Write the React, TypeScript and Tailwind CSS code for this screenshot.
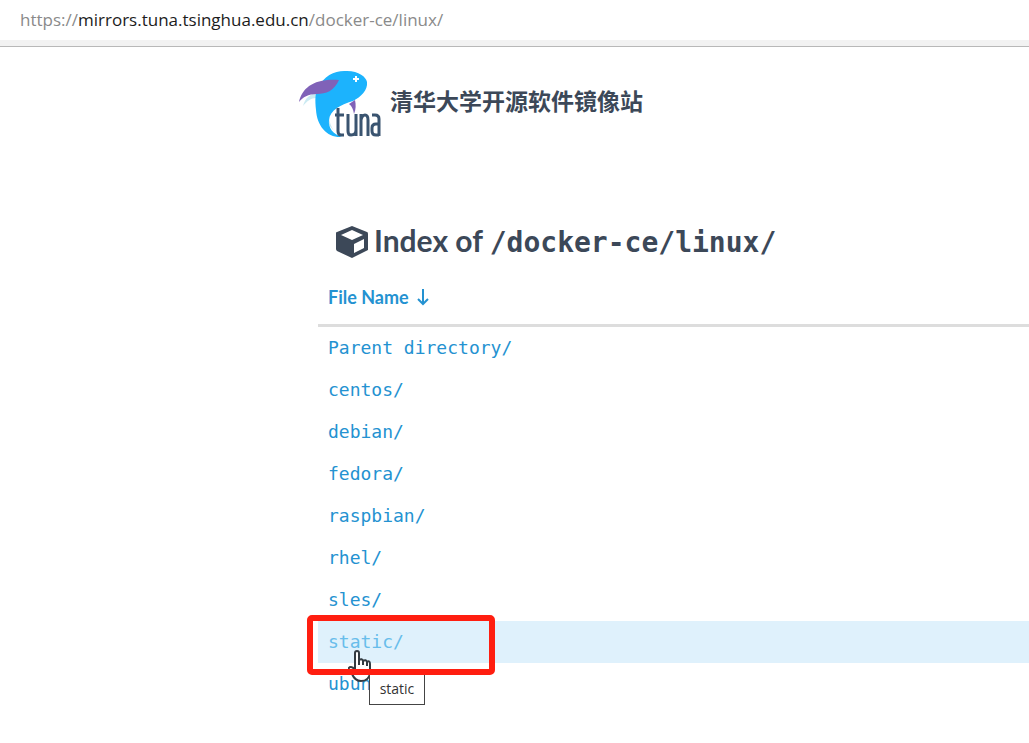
import React from "react";

const rows = [
  "Parent directory/",
  "centos/",
  "debian/",
  "fedora/",
  "raspbian/",
  "rhel/",
  "sles/",
  "static/",
  "ubuntu/",
];

function TunaLogo() {
  return (
    <svg viewBox="0 0 84 68" className="h-[68px] w-[84px] shrink-0" role="img" aria-label="tuna">
      <path d="M5 36C7 28 12 24 20 22L18 28C13 28 9 31 5 36Z" fill="#cbeaf2" />
      <path d="M32 33C30 43 30 52 36 61L26 49Z" fill="#cbeaf2" />
      <path
        d="M20 18C26 5 38 0 49 1C61 1 68 7 69 12C70 20 63 27 55 31C42 35 32 40 31 50C30 58 35 64 44 67C29 68 19 56 18 40C17 30 17 23 20 18Z"
        fill="#1cb3fd"
      />
      <path d="M1 32C4 18 16 8 41 10C36 21 28 24 19 24C10 24 5 27 1 32Z" fill="#8062b8" />
      <path d="M51 34L57 30C58 35 58 39 56 44C55 39 54 36 51 34Z" fill="#8062b8" />
      <path d="M58 6V12M55 9H61" stroke="#fff" strokeWidth="2" />
      <g fill="none" stroke="#3a5470" strokeWidth="3">
        <path d="M40 38V61Q40 65 43 65H46M37 45H46" />
        <path d="M50 44V61Q50 65 53 65Q58 65 58 60V44V66" />
        <path d="M63 66V44M63 50Q64 45 67 45Q70 45 70 50V66" />
        <path d="M74 45H77Q81 45 81 49V66M81 54H78Q74 54 74 58V61Q74 65 78 65H81" />
      </g>
    </svg>
  );
}

function Cube() {
  return (
    <svg viewBox="0 0 32 32" className="h-8 w-8 shrink-0" aria-hidden="true">
      <path
        fillRule="evenodd"
        fill="#3c4858"
        d="M16 0L31 6Q32 6 32 8V24L16 32L1 25Q0 24 0 23V7Q0 6 1 6ZM16 4L5 9L16 14L27 9ZM18 18V27L28 22V13Z"
      />
    </svg>
  );
}

function Hand() {
  return (
    <svg viewBox="0 0 24 34" className="absolute left-[30px] top-[29px] h-[34px] w-6" aria-hidden="true">
      <path
        d="M7 20V3Q7 1 9 1Q11 1 11 3V10Q14 8 15 11Q18 9 19 12Q22 10 22 14V23Q21 31 13 31Q7 31 4 24L1 20Q0 17 3 17Q5 17 7 20Z"
        fill="#fff"
        stroke="#333b42"
        strokeWidth="2"
        strokeLinejoin="round"
      />
      <path d="M11 10V15M15 11V15M19 12V16" stroke="#333b42" strokeWidth="2" />
    </svg>
  );
}

export default function App() {
  return (
    <div className="min-h-screen bg-white font-['Lato','Noto_Sans_CJK_SC',sans-serif] text-[#3c4858]">
      <div className="flex h-[47px] flex-col border-b border-[#b8b8b8] bg-[#f2f2f2]">
        <div className="flex h-10 items-center bg-white pl-5 font-['Open_Sans',sans-serif] text-[17px] text-[#8a8a8a]">
          <span>
            https://<span className="text-[#1c1c1c]">mirrors.tuna.tsinghua.edu.cn</span>/docker-ce/linux/
          </span>
        </div>
      </div>

      <header className="flex items-center pl-[298px] pt-[23px]">
        <a href="#home" className="flex items-center gap-2">
          <TunaLogo />
          <span className="pb-[6px] text-[23px] font-bold">清华大学开源软件镜像站</span>
        </a>
      </header>

      <main className="pl-[318px] pt-[83px]">
        <h1 className="flex h-[42px] items-center gap-[6px] whitespace-nowrap pl-[18px] text-[30px] font-bold">
          <Cube />
          <span className="pb-[2px]">
            Index of{" "}
            <span className="font-['DejaVu_Sans_Mono',monospace] text-[28px]">/docker-ce/linux/</span>
          </span>
        </h1>
        <table className="mt-2 w-full border-collapse text-left">
          <thead>
            <tr className="h-[54px] border-b-3 border-[#dddddd]">
              <th className="p-0 pl-[10px] text-[18px] font-bold text-[#2492d1]">
                <a href="#sort" className="flex items-center gap-2">
                  File Name
                  <svg viewBox="0 0 12 18" className="h-[18px] w-3" fill="none" stroke="currentColor" strokeWidth="2" aria-hidden="true">
                    <path d="M6 1V16M1 11L6 16L11 11" />
                  </svg>
                </a>
              </th>
            </tr>
          </thead>
          <tbody>
            {rows.map((name) => {
              const active = name === "static/";
              return (
                <tr key={name} className={active ? "h-[42px] bg-[#dff1fc]" : "h-[42px]"}>
                  <td className="p-0">
                    <div className={active ? "relative z-10 pl-[10px] font-['DejaVu_Sans_Mono',monospace] text-[18px] leading-[42px]" : "pl-[10px] font-['DejaVu_Sans_Mono',monospace] text-[18px] leading-[42px]"}>
                      <a href={"#" + name} className={active ? "text-[#68bdeb]" : "text-[#2492d1]"}>
                        {name}
                      </a>
                      {active && (
                        <>
                          <Hand />
                          <span
                            role="tooltip"
                            className="absolute left-[51px] top-[52px] flex h-8 w-14 items-center justify-center border border-[#444] bg-white font-['Open_Sans',sans-serif] text-[14px] leading-5 text-[#333]"
                          >
                            static
                          </span>
                          <span className="absolute -left-[11px] -top-[6px] h-[60px] w-[188px] rounded-[5px] border-6 border-[#ff1e10]" />
                        </>
                      )}
                    </div>
                  </td>
                </tr>
              );
            })}
          </tbody>
        </table>
      </main>
    </div>
  );
}
